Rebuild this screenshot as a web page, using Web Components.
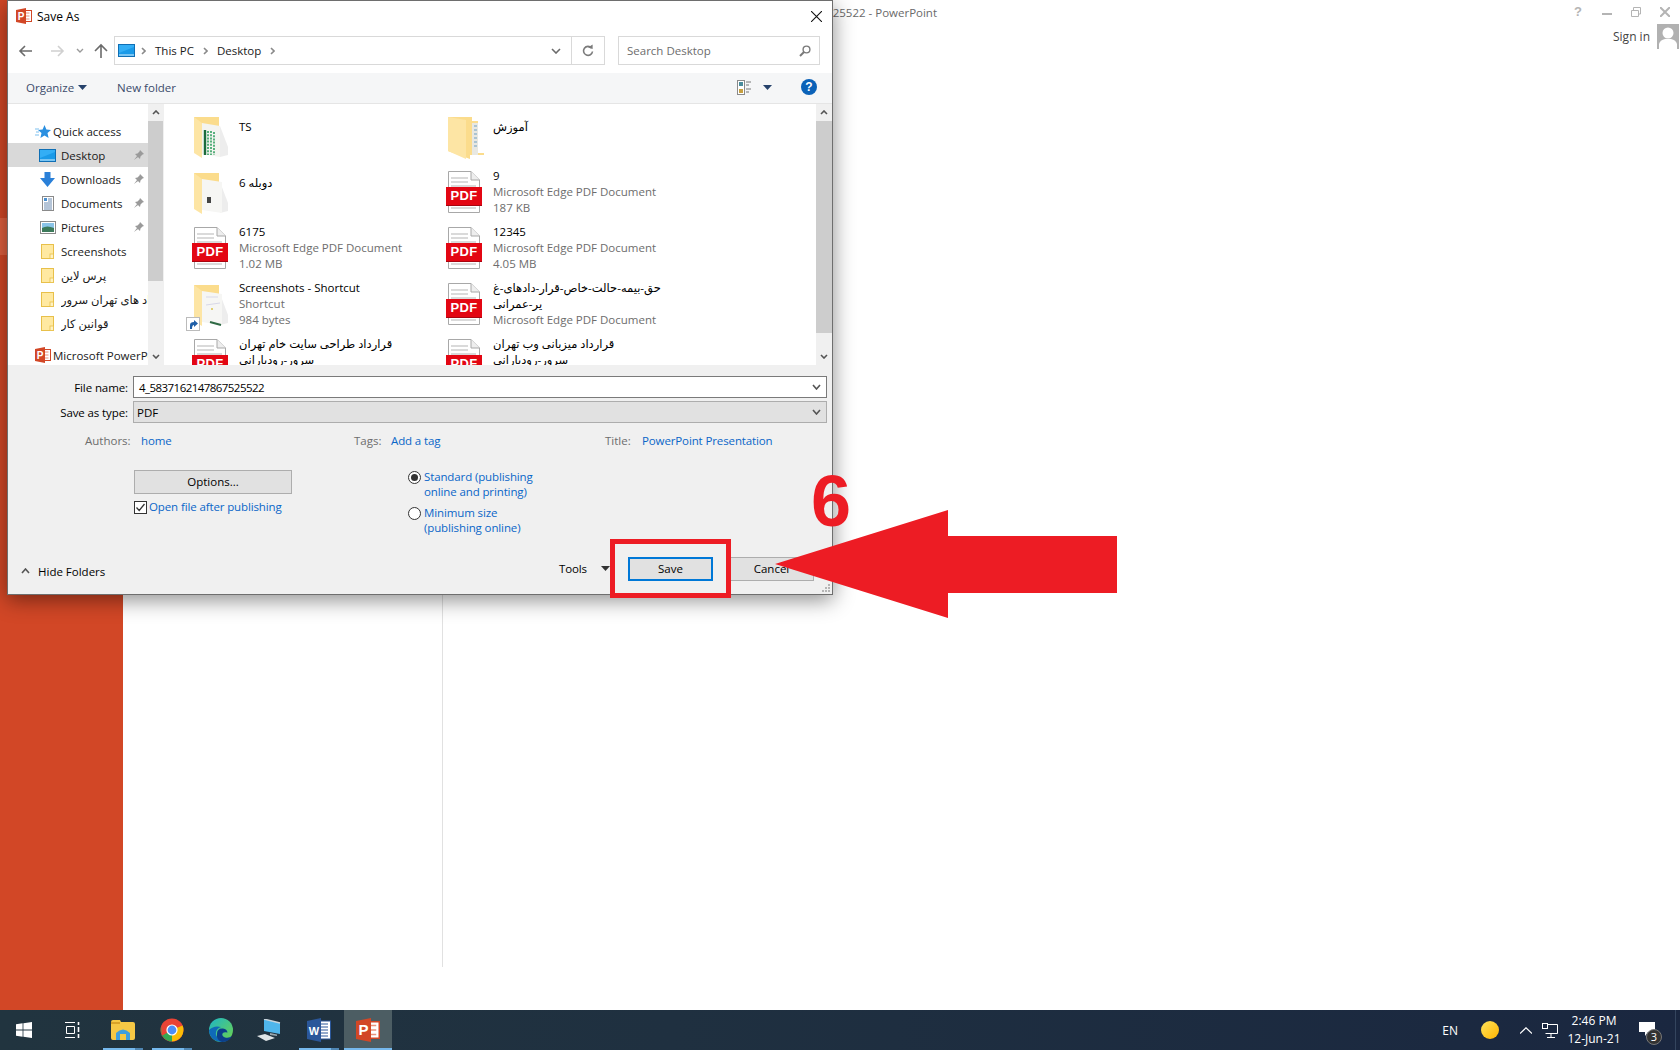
<!DOCTYPE html>
<html>
<head>
<meta charset="utf-8">
<title>Save As</title>
<style>
  html, body { margin: 0; height: 100%; overflow: hidden; background: #fff; }
  body { font-family: "Open Sans", "DejaVu Sans", sans-serif; font-size: 11.5px; color: #000; }
</style>
</head>
<body>
<ppt-window>
  <save-dialog></save-dialog>
  <save-callout></save-callout>
</ppt-window>
<win-taskbar></win-taskbar>

<script>
// icons used by more than one element
const chev = (w, h, color, dir) => {
  const d = dir === 'up' ? `M1 ${h - 1}L${w / 2} 1L${w - 1} ${h - 1}`
    : dir === 'right' ? `M1 1L${w - 1} ${h / 2}L1 ${h - 1}`
    : `M1 1L${w / 2} ${h - 1}L${w - 1} 1`;
  return `<svg width="${w}" height="${h}" viewBox="0 0 ${w} ${h}" style="flex:none;display:block"><path d="${d}" fill="none" stroke="${color}" stroke-width="1.6"/></svg>`;
};
const caret = (color) => `<svg width="9" height="5" viewBox="0 0 9 5" style="flex:none;display:block"><path d="M0 0H9L4.5 5Z" fill="${color}"/></svg>`;
const monitor = `<svg width="17" height="13" viewBox="0 0 17 13" style="flex:none;display:block"><rect x=".5" y=".5" width="16" height="12" fill="#1a9ae8" stroke="#0f6fb5"/><path d="M1 11H16" stroke="#d8f0ff"/><path d="M1 1H16V3L1 9Z" fill="#33aef5"/></svg>`;
const navFolder = `<svg width="13" height="15" viewBox="0 0 13 15" style="flex:none;display:block"><rect x=".5" y=".5" width="12" height="14" fill="#ffe9a1" stroke="#e8c04a"/><rect x="9" y="10" width="3.5" height="4.5" fill="#fff2c4" stroke="#e8c04a" stroke-width=".8"/></svg>`;
const pptLogo = (s) => `<svg width="${s}" height="${s}" viewBox="0 0 16 16" style="flex:none;display:block"><rect x="7.5" y="2.5" width="8" height="11" fill="#fff" stroke="#d24726"/><path d="M9.5 5h4M9.5 8h4M9.5 11h4" stroke="#e8927c"/><path d="M0 2L10 0V16L0 14Z" fill="#d24726"/><text x="5" y="11.6" text-anchor="middle" font-family="Liberation Sans" font-weight="700" font-size="10" fill="#fff">P</text></svg>`;

class PptWindow extends HTMLElement {
  connectedCallback() {
    let shadow = this.attachShadow({ mode: 'open' });
    shadow.innerHTML = `
      <style>
        :host { display: flex; position: relative; height: 1010px; background: #fff; }
        .side { width: 123px; background: #d24726; flex: none; }
        .side div { margin-top: 218px; height: 37px; background: #e0603f; }
        .mid { width: 319px; height: 967px; border-right: 1px solid #e1e1e1; flex: none; }
        .right { flex: 1; display: flex; flex-direction: column; }
        .cap { display: flex; align-items: flex-start; height: 24px; }
        .title { margin-left: 286px; margin-top: 5px; color: #6a6a6a; white-space: nowrap; }
        .btns { margin-left: auto; margin-right: 10px; margin-top: 6px; display: flex; gap: 19px; align-items: center; }
        .q { font: 700 13px "Liberation Sans", sans-serif; color: #b4b4b4; line-height: 12px; margin-right: 1px; }
        .sign { display: flex; justify-content: flex-end; align-items: center; gap: 7px; padding-right: 1px; color: #444; font-size: 12px; }
      </style>
      <div class="side"><div></div></div>
      <div class="mid"></div>
      <div class="right">
        <div class="cap">
          <span class="title">4_5837162147867525522 - PowerPoint</span>
          <div class="btns">
            <span class="q">?</span>
            <svg width="10" height="10" viewBox="0 0 10 10"><path d="M0 7H10" stroke="#b4b4b4" stroke-width="2"/></svg>
            <svg width="10" height="10" viewBox="0 0 10 10"><path d="M.5 3.5H7.5V9.5H.5ZM2.5 3V.5H9.5V7H8" fill="none" stroke="#b4b4b4"/></svg>
            <svg width="10" height="10" viewBox="0 0 10 10"><path d="M0 0L10 10M10 0L0 10" stroke="#b4b4b4" stroke-width="2"/></svg>
          </div>
        </div>
        <div class="sign">
          <span>Sign in</span>
          <svg width="22" height="25" viewBox="0 0 22 25"><rect width="22" height="25" fill="#b1b1b1"/><circle cx="11" cy="9" r="5.5" fill="#fff"/><path d="M2 25V20Q3 16 8 15H14Q19 16 20 20V25Z" fill="#fff"/></svg>
        </div>
      </div>
      <slot></slot>
    `;
  }
}

class SaveDialog extends HTMLElement {
  connectedCallback() {
    let shadow = this.attachShadow({ mode: 'open' });
    shadow.innerHTML = `
      <style>
        :host { display: flex; flex-direction: column; position: absolute; left: 7px; top: 0; width: 824px; height: 593px;
          background: #fff; border: 1px solid #6e6e6e; box-shadow: 0 5px 20px rgba(0,0,0,.45); }
        .titlebar { display: flex; align-items: center; height: 35px; padding: 0 10px 5px 8px; box-sizing: border-box; gap: 5px; font-size: 12px; }
        .titlebar .x { margin-left: auto; }
        .addr { display: flex; align-items: center; height: 29px; margin-right: 12px; }
        .box { box-sizing: border-box; height: 29px; border: 1px solid #d9d9d9; display: flex; align-items: center; }
        .path { width: 491px; flex: none; padding-left: 3px; gap: 6px; color: #1a1a1a; }
        .path .gap { margin-left: 3px; }
        .path .first { margin-left: 0; }
        .path .end { margin-left: auto; display: flex; align-items: center; height: 100%; }
        .path .refresh { margin-left: 10px; width: 32px; height: 100%; border-left: 1px solid #d9d9d9; display: flex; align-items: center; justify-content: center; }
        .search { width: 202px; margin-left: 13px; flex: none; padding: 0 8px; color: #6d6d6d; justify-content: space-between; }
        .tools { margin-top: 8px; background: #f5f6f7; border-bottom: 1px solid #e5e5e5; display: flex; align-items: center; color: #3b4b6b; padding: 0 15px 2px 18px; height: 28px; }
        .tools .org { display: flex; align-items: center; gap: 4px; margin-right: 30px; }
        .tools .views { margin-left: auto; display: flex; align-items: center; gap: 11px; margin-right: 29px; }
        .main { display: flex; height: 261px; overflow: hidden; }
        .nav { width: 140px; flex: none; padding-top: 15px; box-sizing: border-box; }
        .nav nav-item.sep { margin-top: 8px; }
        .scroll1 { margin-right: 3px; border-right: 1px solid #f0f0f0; }
        .files { flex: 1; padding: 8px 0 0 19px; display: grid; grid-template-columns: 254px 254px; grid-auto-rows: 56px; overflow: hidden; }
        .bottom { flex: 1; background: #f0f0f0; display: flex; flex-direction: column; position: relative; }
        .row { display: flex; align-items: center; margin-right: 5px; }
        .row label { width: 120px; text-align: right; margin-right: 5px; flex: none; letter-spacing: -.1px; }
        .input { flex: 1; box-sizing: border-box; height: 22px; border: 1px solid #7a7a7a; background: #fff; display: flex; align-items: center; padding: 0 5px; justify-content: space-between; }
        .input.type { border-color: #adadad; background: #e1e1e1; padding: 0 5px 0 3px; }
        .fname { letter-spacing: -.55px; }
        .meta { display: grid; grid-template-columns: 56px 213px 37px 214px 37px auto; margin: 7px 0 0 77px; height: 20px; align-items: center; color: #6d6d6d; white-space: nowrap; }
        .meta b, .link { font-weight: 400; color: #0a66c8; letter-spacing: -.12px; }
        .opts { display: flex; margin: 20px 0 0 126px; }
        .btn { box-sizing: border-box; height: 24px; background: #e1e1e1; border: 1px solid #adadad; display: flex; align-items: center; justify-content: center; padding-bottom: 2px; }
        .opts .left { width: 274px; flex: none; }
        .opts .btn { width: 158px; }
        .check { display: flex; align-items: center; gap: 2px; margin-top: 6px; }
        .check .link { position: relative; top: -1px; }
        .radios { line-height: 15px; margin-top: -1px; }
        .radio { display: flex; gap: 3px; margin-bottom: 6px; }
        .radio svg { margin-top: 2px; }
        .foot { margin-top: auto; margin-bottom: 13px; display: flex; align-items: center; padding: 0 18px 0 13px; }
        .hide { display: flex; align-items: center; gap: 8px; margin-right: auto; position: relative; top: 2px; }
        .tl { display: flex; align-items: center; gap: 14px; margin-right: 18px; padding-bottom: 2px; letter-spacing: -.1px; }
        .foot .btn { width: 85px; }
        .foot .save { border: 2px solid #0078d7; margin-right: 16px; }
        .grip { position: absolute; right: 1px; bottom: 1px; }
      </style>
      <div class="titlebar">
        ${pptLogo(16)}<span>Save As</span>
        <svg class="x" width="11" height="11" viewBox="0 0 11 11"><path d="M0 0L11 11M11 0L0 11" stroke="#111" stroke-width="1.1"/></svg>
      </div>
      <div class="addr">
        <svg width="106" height="29" viewBox="0 0 106 29" style="flex:none">
          <path d="M12 15H24M17 10L12 15L17 20" fill="none" stroke="#6b6b6b" stroke-width="1.6"/>
          <path d="M43 15H55M50 10L55 15L50 20" fill="none" stroke="#d0d0d0" stroke-width="1.6"/>
          <path d="M69 13L72 16L75 13" fill="none" stroke="#9a9a9a" stroke-width="1.4"/>
          <path d="M93 22V10M87 15L93 9L99 15" fill="none" stroke="#6b6b6b" stroke-width="1.6"/>
        </svg>
        <div class="box path">
          ${monitor}
          <span class="first">${chev(5, 8, '#8a8a8a', 'right')}</span><span class="gap">This PC</span>
          <span class="gap">${chev(5, 8, '#8a8a8a', 'right')}</span><span class="gap">Desktop</span>
          <span class="gap">${chev(5, 8, '#8a8a8a', 'right')}</span>
          <span class="end">
            ${chev(10, 6, '#6b6b6b', 'down')}
            <span class="refresh"><svg width="12" height="13" viewBox="0 0 12 13"><path d="M9.5 4A4.5 4.5 0 1 0 10.5 7.5" fill="none" stroke="#7a7a7a" stroke-width="1.6"/><path d="M6 3.4L10.6 .6V5Z" fill="#7a7a7a"/></svg></span>
          </span>
        </div>
        <div class="box search">
          <span>Search Desktop</span>
          <svg width="12" height="12" viewBox="0 0 12 12"><circle cx="7.5" cy="4.5" r="3.4" fill="none" stroke="#7a7a7a" stroke-width="1.4"/><path d="M5 7L1 11" stroke="#7a7a7a" stroke-width="2"/></svg>
        </div>
      </div>
      <div class="tools">
        <span class="org">Organize ${caret('#26426b')}</span>
        <span>New folder</span>
        <span class="views">
          <svg width="15" height="15" viewBox="0 0 15 15"><rect x=".5" y=".5" width="7" height="14" fill="#fff" stroke="#8a8a8a"/><rect x="2" y="2" width="4" height="4" fill="#4a8c9c"/><rect x="2" y="9" width="4" height="4" fill="#c8a040"/><path d="M9 2h5M9 5h3M9 9h5M9 12h3" stroke="#777"/></svg>
          ${caret('#26426b')}
        </span>
        <svg width="16" height="16" viewBox="0 0 16 16"><circle cx="8" cy="8" r="8" fill="#0b62b8"/><text x="8" y="12.3" text-anchor="middle" font-family="Liberation Sans" font-weight="700" font-size="12" fill="#fff">?</text></svg>
      </div>
      <div class="main">
        <div class="nav">
          <nav-item kind="star" wide>Quick access</nav-item>
          <nav-item kind="desktop" pin selected>Desktop</nav-item>
          <nav-item kind="down" pin>Downloads</nav-item>
          <nav-item kind="docs" pin>Documents</nav-item>
          <nav-item kind="pics" pin>Pictures</nav-item>
          <nav-item kind="folder">Screenshots</nav-item>
          <nav-item kind="folder">پرس لاین</nav-item>
          <nav-item kind="folder">قرارداد های تهران سرور</nav-item>
          <nav-item kind="folder">قوانین کار</nav-item>
          <nav-item class="sep" kind="ppt" wide>Microsoft PowerPoint</nav-item>
        </div>
        <win-scroll class="scroll1" size="15" thumb="160"></win-scroll>
        <div class="files">
          <file-item kind="xls" single>TS</file-item>
          <file-item kind="paper" single>آموزش</file-item>
          <file-item kind="doc" single>دوبله 6</file-item>
          <file-item kind="pdf" line2="Microsoft Edge PDF Document" line3="187 KB">9</file-item>
          <file-item kind="pdf" line2="Microsoft Edge PDF Document" line3="1.02 MB">6175</file-item>
          <file-item kind="pdf" line2="Microsoft Edge PDF Document" line3="4.05 MB">12345</file-item>
          <file-item kind="shortcut" line2="Shortcut" line3="984 bytes">Screenshots - Shortcut</file-item>
          <file-item kind="pdf" line2="یر-عمرانی" line3="Microsoft Edge PDF Document">حق-بیمه-حالت-خاص-قرار-دادهای-غ</file-item>
          <file-item kind="pdf" line2="سرور-رودبارانی">قرارداد طراحی سایت خام تهران</file-item>
          <file-item kind="pdf" line2="سرور-رودبارانی">قرارداد میزبانی وب تهران</file-item>
        </div>
        <win-scroll size="16" thumb="212"></win-scroll>
      </div>
      <div class="bottom">
        <div class="row" style="margin-top:11px"><label>File name:</label>
          <div class="input"><span class="fname">4_5837162147867525522</span>${chev(9, 6, '#555', 'down')}</div></div>
        <div class="row" style="margin-top:3px"><label>Save as type:</label>
          <div class="input type"><span>PDF</span>${chev(9, 6, '#555', 'down')}</div></div>
        <div class="meta">
          <span>Authors:</span><b>home</b>
          <span>Tags:</span><b>Add a tag</b>
          <span>Title:</span><b>PowerPoint Presentation</b>
        </div>
        <div class="opts">
          <div class="left">
            <div class="btn">Options...</div>
            <div class="check">
              <svg width="13" height="13" viewBox="0 0 13 13"><rect x=".5" y=".5" width="12" height="12" fill="#fff" stroke="#333"/><path d="M2.5 6.5L5.2 9.5L10.5 3" fill="none" stroke="#333" stroke-width="1.3"/></svg>
              <span class="link">Open file after publishing</span>
            </div>
          </div>
          <div class="radios">
            <div class="radio">
              <svg width="13" height="13" viewBox="0 0 13 13" style="flex:none"><circle cx="6.5" cy="6.5" r="6" fill="#fff" stroke="#333"/><circle cx="6.5" cy="6.5" r="3.5" fill="#333"/></svg>
              <span class="link">Standard (publishing<br>online and printing)</span>
            </div>
            <div class="radio">
              <svg width="13" height="13" viewBox="0 0 13 13" style="flex:none"><circle cx="6.5" cy="6.5" r="6" fill="#fff" stroke="#333"/></svg>
              <span class="link">Minimum size<br>(publishing online)</span>
            </div>
          </div>
        </div>
        <div class="foot">
          <span class="hide">${chev(9, 6, '#555', 'up')}Hide Folders</span>
          <span class="tl">Tools ${caret('#333')}</span>
          <div class="btn save">Save</div>
          <div class="btn">Cancel</div>
        </div>
        <svg class="grip" width="10" height="10" viewBox="0 0 10 10" fill="#b5b5b5"><rect x="7" y="1" width="2" height="2"/><rect x="4" y="4" width="2" height="2"/><rect x="7" y="4" width="2" height="2"/><rect x="1" y="7" width="2" height="2"/><rect x="4" y="7" width="2" height="2"/><rect x="7" y="7" width="2" height="2"/></svg>
      </div>
    `;
  }
}

class NavItem extends HTMLElement {
  connectedCallback() {
    const icons = {
      star: `<svg width="16" height="15" viewBox="0 0 16 15"><path d="M9.5 1L11.4 5.5L16 6L12.5 9L13.6 14L9.5 11.5L5.4 14L6.5 9L3 6L7.6 5.5Z" fill="#2a8fe0"/><path d="M0 5H4M1 8H4M0 11H4" stroke="#7cc0ef"/></svg>`,
      desktop: monitor,
      down: `<svg width="17" height="15" viewBox="0 0 17 15"><path d="M5.5 0H11.5V6H16L8.5 15L1 6H5.5Z" fill="#2a80d8"/></svg>`,
      docs: `<svg width="12" height="15" viewBox="0 0 12 15"><rect x=".5" y=".5" width="11" height="14" fill="#fff" stroke="#8a8a8a"/><rect x="2" y="2" width="3" height="3" fill="#4a90d0"/><path d="M6 3H10M6 5H10M2 7H10M2 9H10M2 11H10M2 13H10" stroke="#6a8ab0"/></svg>`,
      pics: `<svg width="16" height="13" viewBox="0 0 16 13"><rect x=".5" y=".5" width="15" height="12" fill="#fff" stroke="#8a8a8a"/><rect x="2" y="2" width="12" height="5" fill="#8ac4e8"/><path d="M2 7Q7 4 14 7V11H2Z" fill="#3c7a5a"/></svg>`,
      folder: navFolder,
      ppt: pptLogo(16)
    };
    const kind = this.getAttribute('kind');
    const wide = this.hasAttribute('wide');
    let shadow = this.attachShadow({ mode: 'open' });
    shadow.innerHTML = `
      <style>
        :host { display: flex; align-items: center; height: 24px; padding-left: ${wide ? 24 : 29}px; box-sizing: border-box; position: relative; overflow: hidden; white-space: nowrap; color: #1a1a1a; }
        :host([selected]) { background: #d9d9d9; }
        .ic { width: 21px; flex: none; display: flex; justify-content: center; margin-right: ${wide ? 0 : 3}px; }
        .txt { flex: 1; overflow: hidden; min-width: 0; }
        .pin { flex: none; margin: 0 4px 0 1px; }
      </style>
      <span class="ic">${icons[kind]}</span>
      <span class="txt"><slot></slot></span>
      ${this.hasAttribute('pin') ? `<svg class="pin" width="10" height="10" viewBox="0 0 10 10"><path d="M6 0L10 4L8.5 4.5L6.5 6.5L6 9L1 4L3.5 3.5L5.5 1.5ZM3 6L0 10L4 7Z" fill="#9a9a9a"/></svg>` : ''}
    `;
  }
}

class WinScroll extends HTMLElement {
  connectedCallback() {
    const size = this.getAttribute('size');
    const thumb = this.getAttribute('thumb');
    let shadow = this.attachShadow({ mode: 'open' });
    shadow.innerHTML = `
      <style>
        :host { display: flex; flex-direction: column; width: ${size}px; flex: none; background: #f0f0f0; }
        .arrow { height: 17px; display: flex; align-items: center; justify-content: center; }
        .thumb { height: ${thumb}px; background: #cdcdcd; }
        .down { margin-top: auto; }
      </style>
      <div class="arrow">${chev(8, 5, '#555', 'up')}</div>
      <div class="thumb"></div>
      <div class="arrow down">${chev(8, 5, '#555', 'down')}</div>
    `;
  }
}

class FileItem extends HTMLElement {
  connectedCallback() {
    const kind = this.getAttribute('kind');
    const page = `<svg width="32" height="42" viewBox="0 0 32 42" style="position:absolute;left:8px;top:3px"><path d="M.5 .5H23L31.5 9V41.5H.5Z" fill="#fff" stroke="#a8a8a8"/><path d="M23 .5V9H31.5" fill="#eee" stroke="#a8a8a8"/><path d="M3 7H20M3 11H20M3 15H28M3 37H28" stroke="#b5b5b5"/></svg>
      <span class="pdf">PDF</span>`;
    // the paper inside the folder changes with the kind of folder
    const inner = {
      xls: `<path d="M8 6L26 9V40L8 37Z" fill="#f4f4f0"/><path d="M11 13V38" stroke="#1d6b3c" stroke-width="2.4"/><path d="M14 14V38M17 14V38M20 15V38" stroke="#58b07c" stroke-width="2" stroke-dasharray="2 1.2"/>`,
      doc: `<path d="M8 6L28 9V40L8 37Z" fill="#f6f6f4"/><rect x="13" y="24" width="4" height="6" fill="#444"/>`,
      shortcut: `<path d="M8 6L28 9V40L8 37Z" fill="#f6f6f4"/><path d="M12 12H24M12 20L26 18" stroke="#d8d8e8"/><path d="M16 37L27 40" stroke="#2f6a45" stroke-width="2"/><circle cx="18" cy="24" r="1" fill="#d9c24a"/>`
    };
    let art;
    if (kind === 'pdf') {
      art = page;
    } else if (kind === 'paper') {
      art = `<svg width="36" height="42" viewBox="0 0 36 42" style="position:absolute;left:8px;top:5px"><path d="M0 0H24V4H30V36H36V38L22 38V42L0 34Z" fill="#fbdc8c"/><path d="M24 6H30V38H24Z" fill="#e8e8e2"/><path d="M26 9H29M26 13H29M26 17H29M26 21H29M26 25H29M26 29H29" stroke="#6e9fc2"/><path d="M0 0L18 3V42L0 34Z" fill="#fde5a4"/></svg>`;
    } else {
      art = `<svg width="36" height="42" viewBox="0 0 36 42" style="position:absolute;left:8px;top:5px"><path d="M0 0H25V34L0 36Z" fill="#fbdc8c"/><path d="M26 9L34 30V38L26 40Z" fill="#ededed"/>${inner[kind]}<path d="M0 0L8 6V41L0 36Z" fill="#fde5a4"/></svg>`;
    }
    const badge = kind === 'shortcut' ? `<svg width="14" height="14" viewBox="0 0 14 14" style="position:absolute;left:0;top:37px"><rect x=".5" y=".5" width="13" height="13" fill="#fff" stroke="#bbb"/><path d="M4 12V8Q4 5 8 5V3L12 6.5L8 10V8Q6 8 6 12Z" fill="#1f5fa8"/></svg>` : '';
    const line2 = this.getAttribute('line2');
    const line3 = this.getAttribute('line3');
    const isRtlLine = (t) => t && /[\u0600-\u06ff]/.test(t);
    let shadow = this.attachShadow({ mode: 'open' });
    shadow.innerHTML = `
      <style>
        :host { display: flex; gap: 5px; align-items: flex-start; line-height: 16px; white-space: nowrap; }
        .ic { position: relative; width: 48px; height: 50px; flex: none; }
        .pdf { position: absolute; left: 6px; top: 19px; width: 36px; height: 19px; background: #e30613; border-bottom: 1px solid #a80510; box-sizing: border-box;
          color: #fff; font: 700 13px/18px "Liberation Sans", sans-serif; text-align: center; letter-spacing: .4px; }
        .name { color: #000; }
        .sub { color: #6d6d6d; }
        .lines { ${this.hasAttribute('single') ? 'padding-top: 7px;' : ''} }
      </style>
      <div class="ic">${art}${badge}</div>
      <div class="lines">
        <div class="name"><slot></slot></div>
        ${line2 ? `<div class="${isRtlLine(line2) ? 'name' : 'sub'}">${line2}</div>` : ''}
        ${line3 ? `<div class="sub">${line3}</div>` : ''}
      </div>
    `;
  }
}

// the red annotation drawn over the screenshot
class SaveCallout extends HTMLElement {
  connectedCallback() {
    let shadow = this.attachShadow({ mode: 'open' });
    shadow.innerHTML = `
      <style>
        :host { display: block; }
        .box { position: absolute; left: 610px; top: 539px; width: 121px; height: 59px; box-sizing: border-box; border: 5px solid #ed1c24; }
        .six { position: absolute; left: 811px; top: 461px; font: 700 72px/80px "Liberation Sans", sans-serif; color: #ed1c24; }
        svg { position: absolute; left: 775px; top: 510px; }
      </style>
      <div class="box"></div>
      <div class="six">6</div>
      <svg width="342" height="108" viewBox="0 0 342 108"><path d="M0 54L173 0V26H342V83H173V108Z" fill="#ed1c24"/></svg>
    `;
  }
}

class WinTaskbar extends HTMLElement {
  connectedCallback() {
    let shadow = this.attachShadow({ mode: 'open' });
    shadow.innerHTML = `
      <style>
        :host { display: flex; align-items: center; height: 40px; background: linear-gradient(90deg, #21343f, #1f3040 40%, #1a2740); color: #fff; position: relative; }
        .start, .tv { width: 48px; height: 40px; display: flex; align-items: center; justify-content: center; flex: none; }
        .app { width: 40px; height: 40px; display: flex; align-items: center; justify-content: center; flex: none; box-sizing: border-box; border-bottom: 2px solid transparent; padding-top: 2px; }
        .app.open { border-bottom: 2px solid #76b9ed; border-image: linear-gradient(90deg, #76b9ed 78%, #4f86b3 78%) 1; }
        .app.active { background: #4c5d63; border-bottom: 2px solid #76b9ed; width: 48px; }
        .tray { margin-left: auto; display: flex; align-items: center; height: 40px; font-size: 12px; }
        .en { margin-right: 23px; }
        .sun { width: 18px; height: 18px; border-radius: 50%; background: linear-gradient(135deg, #ffe45c, #ffb400); margin-right: 21px; }
        .clock { text-align: center; line-height: 18px; width: 66px; margin: 0 12px 0 3px; font-size: 12px; }
        .note { position: relative; width: 18px; height: 26px; margin: 10px 18px 0 0; }
        .badge { position: absolute; left: 7px; top: 7px; width: 16px; height: 16px; border-radius: 50%; background: #333; border: 1px solid #777; box-sizing: border-box; font-size: 11px; line-height: 14px; text-align: center; }
        .edge { width: 1px; height: 40px; background: #34455e; margin-right: 4px; }
      </style>
      <div class="start"><svg width="16" height="16" viewBox="0 0 16 16" fill="#fff"><path d="M0 2.3L6.6 1.3V7.6H0ZM7.4 1.2L16 0V7.6H7.4ZM0 8.4H6.6V14.7L0 13.7ZM7.4 8.4H16V16L7.4 14.8Z"/></svg></div>
      <div class="tv"><svg width="16" height="16" viewBox="0 0 16 16" fill="none" stroke="#fff"><path d="M1 .5H11M2.5 4.5H10.5V11.5H2.5ZM1 15.5H11"/><path d="M14.5 0V3M14.5 5V10M14.5 12V16" stroke-width="1.6"/></svg></div>
      <div class="app open" style="margin-left:7px"><svg width="24" height="20" viewBox="0 0 24 20"><path d="M0 2Q0 0 2 0H9L10 2H22Q24 2 24 4V18Q24 20 22 20H2Q0 20 0 18Z" fill="#f6c845"/><path d="M0 2H9V4H0Z" fill="#d9a328"/><path d="M5 13Q12 6 19 13V20H5Z" fill="#3f9fe0"/><rect x="9" y="14" width="6" height="6" fill="#f6c845"/></svg></div>
      <div class="app open" style="margin-left:9px"><svg width="24" height="24" viewBox="0 0 24 24"><circle cx="12" cy="12" r="11.5" fill="#ea4335"/><path d="M12 12L1.6 18L1.3 8.5A11.5 11.5 0 0 0 12 23.5Z" fill="#34a853"/><path d="M12 12L22.5 7.5A11.5 11.5 0 0 1 12 23.5Z" fill="#fbbc05"/><circle cx="12" cy="12" r="5.6" fill="#fff"/><circle cx="12" cy="12" r="4.4" fill="#4e8ef7"/></svg></div>
      <div class="app" style="margin-left:9px"><svg width="24" height="24" viewBox="0 0 24 24"><defs><linearGradient id="e1" x1="0" y1="0" x2="1" y2="1"><stop offset="0" stop-color="#1db6c8"/><stop offset="1" stop-color="#6ed34a"/></linearGradient></defs><circle cx="12" cy="12" r="12" fill="url(#e1)"/><path d="M0 12A12 12 0 0 0 16 23.3Q9 23 7 17Q6 11 12 9Q5 7 0 12Z" fill="#0f6ab8"/><path d="M8 16Q8 10 14 10.5Q18 11 18.5 14.5Q15 13.5 13.5 15.5Q12.5 18 16 19.5Q20 20.5 23 18Q20 24 13 24Q7 22 8 16Z" fill="#0c3f8a"/></svg></div>
      <div class="app" style="margin-left:8px"><svg width="24" height="22" viewBox="0 0 24 22"><path d="M7 0L23 4V15L7 12Z" fill="#4fb6ec"/><path d="M7 0L23 4" stroke="#c8d4dc" stroke-width="1.4"/><path d="M13 14L20 15.5V17L13 16Z" fill="#9aa7ae"/><path d="M0 17L8 15L18 19L9 22Z" fill="#dfe4e6"/></svg></div>
      <div class="app open" style="margin-left:10px"><svg width="24" height="24" viewBox="0 0 24 24"><rect x="11" y="3" width="12.5" height="18" fill="#fff" stroke="#2b579a"/><path d="M14 6H21M14 9H21M14 12H21M14 15H21M14 18H21" stroke="#2b579a"/><path d="M0 3L14 0V24L0 21Z" fill="#2b579a"/><text x="7" y="16.5" text-anchor="middle" font-family="Liberation Sans" font-weight="700" font-size="11" fill="#fff">W</text></svg></div>
      <div class="app active" style="margin-left:5px">${pptLogo(24)}</div>
      <div class="tray">
        <span class="en">EN</span>
        <div class="sun"></div>
        <svg width="12" height="7" viewBox="0 0 12 7" style="margin-right:10px"><path d="M0 6.5L6 .8L12 6.5" fill="none" stroke="#fff" stroke-width="1.2"/></svg>
        <svg width="16" height="15" viewBox="0 0 16 15" fill="none" stroke="#fff"><path d="M3.5 1.5H15.5V10.5H3.5"/><rect x=".5" y=".5" width="5" height="5" fill="#1a2740"/><path d="M9 10.5V14M5 14.5H13"/></svg>
        <div class="clock"><div>2:46 PM</div><div>12-Jun-21</div></div>
        <div class="note">
          <svg width="16" height="14" viewBox="0 0 16 14" style="position:absolute;left:0;top:0"><path d="M0 0H16V10H9L6 14V10H0Z" fill="#fff"/></svg>
          <span class="badge">3</span>
        </div>
        <div class="edge"></div>
      </div>
    `;
  }
}

customElements.define('ppt-window', PptWindow);
customElements.define('save-dialog', SaveDialog);
customElements.define('nav-item', NavItem);
customElements.define('win-scroll', WinScroll);
customElements.define('file-item', FileItem);
customElements.define('save-callout', SaveCallout);
customElements.define('win-taskbar', WinTaskbar);
</script>
</body>
</html>
